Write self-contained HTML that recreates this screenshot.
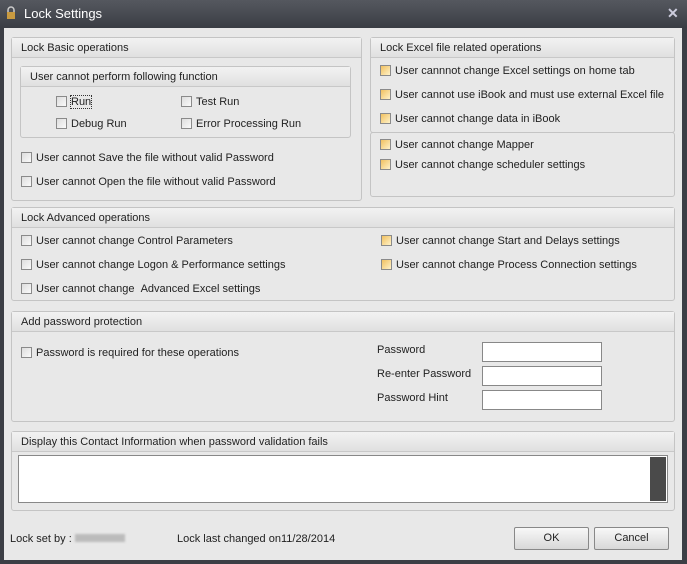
<!DOCTYPE html>
<html><head><style>
*{box-sizing:border-box;margin:0;padding:0}
body{width:687px;height:564px;background:#3b3e45;font-family:"Liberation Sans",Tahoma,sans-serif;font-size:11px;color:#222;position:relative;overflow:hidden}
.title{position:absolute;left:0;top:0;width:687px;height:28px;background:linear-gradient(#55585f,#3a3d44);color:#fff;font-size:13px}
.title span{position:absolute;left:24px;top:6px}
.body{position:absolute;left:4px;top:28px;width:678px;height:532px;background:#e8e8e8}
.p{position:absolute;border:1px solid #c4c4c4;border-radius:3px;background:#e8e8e8}
.h{position:absolute;left:0;top:0;right:0;height:20px;background:linear-gradient(#f2f2f2,#e0e0e0);border-bottom:1px solid #c8c8c8;padding:4px 0 0 9px}
.a{position:absolute;white-space:nowrap}
.cb{display:inline-block;width:11px;height:11px;border:1px solid #8a8a8a;background:linear-gradient(135deg,#ddd,#fafafa);vertical-align:-2px;margin-right:4px}
.cy{background:linear-gradient(135deg,#f0c060,#fff2c8)}
.in{position:absolute;background:#fff;border:1px solid #888;width:120px;height:20px}
.btn{position:absolute;top:499px;width:75px;height:23px;border:1px solid #888;border-radius:2px;background:linear-gradient(#f8f8f8,#d8d8d8);text-align:center;line-height:21px}
</style></head><body>
<div class="title"><svg style="position:absolute;left:6px;top:6px" width="10" height="14"><path d="M2 6V4a3 3 0 0 1 6 0v2" stroke="#ccc" stroke-width="1.5" fill="none"/><rect x="1" y="6" width="8" height="7" fill="#c89a40"/></svg><span>Lock Settings</span><span style="left:667px;top:5px;font-weight:bold;font-size:14px;color:#ccd">✕</span></div>
<div class="body">
<div class="p" style="left:7px;top:9px;width:351px;height:164px"><div class="h">Lock Basic operations</div>
 <div class="p" style="left:8px;top:28px;width:331px;height:72px"><div class="h">User cannot perform following function</div>
  <div class="a" style="left:35px;top:29px"><span class="cb"></span><span style="outline:1px dotted #333">Run</span></div>
  <div class="a" style="left:160px;top:29px"><span class="cb"></span>Test Run</div>
  <div class="a" style="left:35px;top:51px"><span class="cb"></span>Debug Run</div>
  <div class="a" style="left:160px;top:51px"><span class="cb"></span>Error Processing Run</div>
 </div>
 <div class="a" style="left:9px;top:114px"><span class="cb"></span>User cannot Save the file without valid Password</div>
 <div class="a" style="left:9px;top:138px"><span class="cb"></span>User cannot Open the file without valid Password</div>
</div>
<div class="p" style="left:366px;top:9px;width:305px;height:96px"><div class="h">Lock Excel file related operations</div>
 <div class="a" style="left:9px;top:27px"><span class="cb cy"></span>User cannnot change Excel settings on home tab</div>
 <div class="a" style="left:9px;top:51px"><span class="cb cy"></span>User cannot use iBook and must use external Excel file</div>
 <div class="a" style="left:9px;top:75px"><span class="cb cy"></span>User cannot change data in iBook</div>
</div>
<div class="p" style="left:366px;top:104px;width:305px;height:65px">
 <div class="a" style="left:9px;top:6px"><span class="cb cy"></span>User cannot change Mapper</div>
 <div class="a" style="left:9px;top:26px"><span class="cb cy"></span>User cannot change scheduler settings</div>
</div>
<div class="p" style="left:7px;top:179px;width:664px;height:94px"><div class="h">Lock Advanced operations</div>
 <div class="a" style="left:9px;top:27px"><span class="cb"></span>User cannot change Control Parameters</div>
 <div class="a" style="left:9px;top:51px"><span class="cb"></span>User cannot change Logon &amp; Performance settings</div>
 <div class="a" style="left:9px;top:75px"><span class="cb"></span>User cannot change &nbsp;Advanced Excel settings</div>
 <div class="a" style="left:369px;top:27px"><span class="cb cy"></span>User cannot change Start and Delays settings</div>
 <div class="a" style="left:369px;top:51px"><span class="cb cy"></span>User cannot change Process Connection settings</div>
</div>
<div class="p" style="left:7px;top:283px;width:664px;height:111px"><div class="h">Add password protection</div>
 <div class="a" style="left:9px;top:35px"><span class="cb"></span>Password is required for these operations</div>
 <div class="a" style="left:365px;top:32px">Password</div>
 <div class="a" style="left:365px;top:56px">Re-enter Password</div>
 <div class="a" style="left:365px;top:80px">Password Hint</div>
 <div class="in" style="left:470px;top:30px"></div>
 <div class="in" style="left:470px;top:54px"></div>
 <div class="in" style="left:470px;top:78px"></div>
</div>
<div class="p" style="left:7px;top:403px;width:664px;height:80px"><div class="h">Display this Contact Information when password validation fails</div>
 <div style="position:absolute;left:6px;top:23px;width:650px;height:48px;background:#fff;border:1px solid #888"><div style="position:absolute;right:1px;top:1px;width:16px;height:44px;background:#4a4a4a"></div></div>
</div>
<div class="a" style="left:6px;top:505px">Lock set by : <span style="display:inline-block;width:50px;height:8px;background:#bbb;filter:blur(1px);vertical-align:0"></span></div>
<div class="a" style="left:173px;top:505px">Lock last changed on11/28/2014</div>
<div class="btn" style="left:510px">OK</div>
<div class="btn" style="left:590px">Cancel</div>
</div>
</body></html>
